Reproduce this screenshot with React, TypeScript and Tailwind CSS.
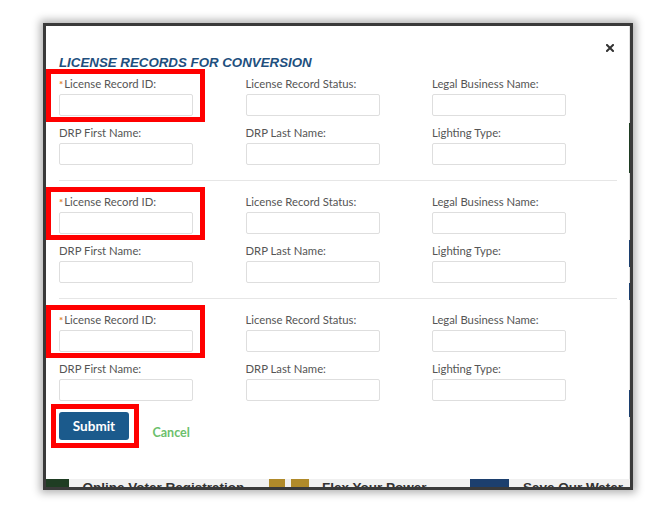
import React from "react";

type FieldProps = { label: string; required?: boolean; highlight?: boolean };

function Field({ label, required, highlight }: FieldProps) {
  return (
    <div className="relative flex flex-col">
      <label className="h-[14px] leading-[14px] text-[11.3px] text-[#555555] whitespace-nowrap font-['Lato',sans-serif]">
        {required && <span className="text-[#e0832a] mr-[1px] text-[10px] font-bold">*</span>}
        {label}
      </label>
      <input
        type="text"
        className="mt-[3px] h-[22px] w-full border border-[#dedede] rounded-[2px] bg-white outline-none"
      />
      {highlight && (
        <div className="absolute top-[-8px] bottom-[-6px] left-[-13px] right-[-12px] border-[5px] border-[#ff0000] pointer-events-none" />
      )}
    </div>
  );
}

function Section() {
  return (
    <div className="grid grid-cols-[134px_134px_134px] gap-x-[52.5px] gap-y-[10px]">
      <Field label="License Record ID:" required highlight />
      <Field label="License Record Status:" />
      <Field label="Legal Business Name:" />
      <Field label="DRP First Name:" />
      <Field label="DRP Last Name:" />
      <Field label="Lighting Type:" />
    </div>
  );
}

function Divider() {
  return <div className="mt-[15px] mb-[14px] mr-[12px] h-px bg-[#e6e6e6]" />;
}

export default function App() {
  return (
    <div className="w-[650px] h-[510px] bg-white pl-[43px] pt-[23px] overflow-hidden">
      <div className="w-[590px] h-[467px] border-[3px] border-[#3a3a3a] shadow-[0_0_8px_3px_rgba(0,0,0,0.3)] flex flex-col bg-[#e8e8e8]">
        <div className="flex h-[453px]">
          <div className="w-[583px] h-[453px] bg-white pt-[18px] flex flex-col">
            <div className="flex justify-end pr-[15px] h-[8px]">
              <svg width="8" height="8" viewBox="0 0 8 8">
                <path d="M1 1 L7 7 M7 1 L1 7" stroke="#333333" strokeWidth="2" strokeLinecap="square" />
              </svg>
            </div>
            <h2 className="mt-[3px] ml-[13px] h-[16px] leading-[16px] text-[13.3px] font-bold italic text-[#1e4f7e] font-['Liberation_Sans',Arial,sans-serif]">
              LICENSE RECORDS FOR CONVERSION
            </h2>
            <div className="pl-[13px] pt-[6px]">
              <Section />
              <Divider />
              <Section />
              <Divider />
              <Section />
              <div className="mt-[11px] flex items-end">
                <div className="relative">
                  <button className="w-[70px] h-[28px] rounded-[3px] bg-[#1b5a8c] text-white text-[13.5px] font-bold font-['Lato',sans-serif] leading-[28px]">
                    Submit
                  </button>
                  <div className="absolute top-[-8px] bottom-[-8px] left-[-8px] right-[-10px] border-[5px] border-[#ff0000] pointer-events-none" />
                </div>
                <span className="ml-[23.5px] mb-[-1px] leading-[16px] text-[12.5px] font-bold text-[#6cbf6c] font-['Lato',sans-serif]">
                  Cancel
                </span>
              </div>
            </div>
          </div>
          <div className="flex-1 flex flex-col bg-[#e4e4e4]">
            <div className="h-[97px]" />
            <div className="h-[50px] bg-[#1f3d23]" />
            <div className="h-[67px]" />
            <div className="h-[27px] bg-[#1c3f6e]" />
            <div className="h-[16px]" />
            <div className="h-[17px] bg-[#1c3f6e]" />
            <div className="h-[90px]" />
            <div className="h-[27px] bg-[#1c3f6e]" />
          </div>
        </div>
        <div className="h-[8px] overflow-hidden flex bg-[#f0f0f0] text-[#333333] font-['Liberation_Sans',Arial,sans-serif] text-[13.5px] font-bold leading-[16px] whitespace-nowrap">
          <div className="w-[223px] flex overflow-hidden">
            <div className="w-[23px] h-[8px] bg-[#1f3d23]" />
            <span className="ml-[13.5px] mt-[1px]">Online Voter Registration</span>
          </div>
          <div className="w-[201px] flex overflow-hidden">
            <div className="w-[16px] h-[8px] bg-[#b08a2a]" />
            <div className="ml-[6px] w-[18px] h-[8px] bg-[#b08a2a]" />
            <span className="ml-[13px] mt-[1px]">Flex Your Power</span>
          </div>
          <div className="flex-1 flex overflow-hidden">
            <div className="w-[39px] h-[8px] bg-[#1c3f6e]" />
            <span className="ml-[14px] mt-[1px]">Save Our Water</span>
          </div>
        </div>
      </div>
    </div>
  );
}
